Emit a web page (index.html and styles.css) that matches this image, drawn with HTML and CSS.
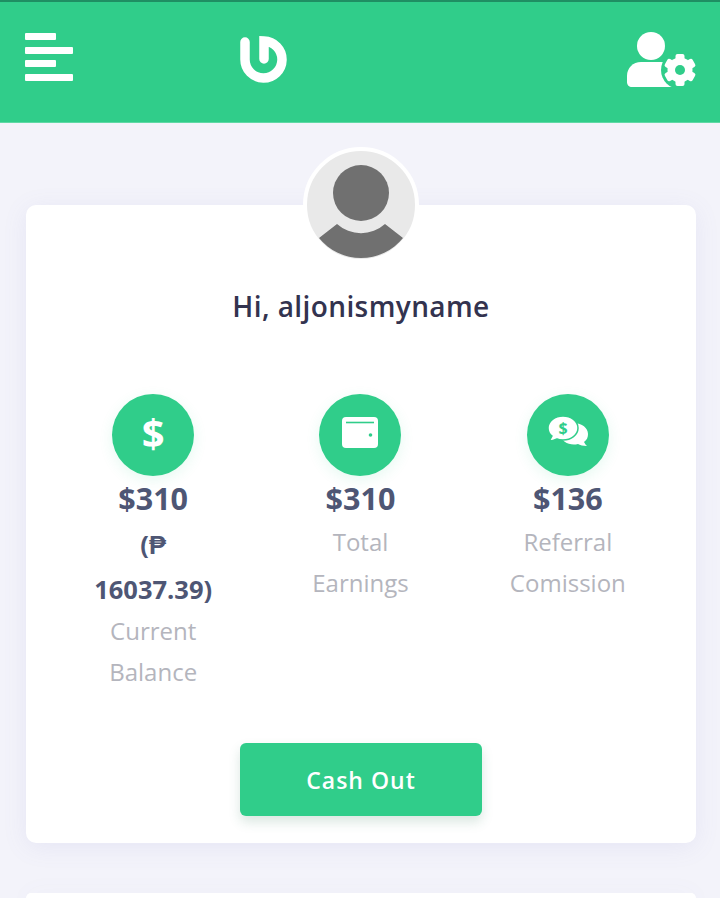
FILE: index.html
```html
<!DOCTYPE html>
<html lang="en">

<head>
    <meta charset="UTF-8">
    <meta name="viewport" content="width=device-width, initial-scale=1.0">
    <link rel="stylesheet" href="styles.css">
    <title>Dashboard</title>
</head>

<body>
    <header class="topbar">
        <div class="menu-icon">
            <span class="bar short"></span>
            <span class="bar"></span>
            <span class="bar short"></span>
            <span class="bar"></span>
        </div>
        <svg class="logo" width="48" height="48" viewBox="0 0 48 48">
            <path d="M5 6V23.5A18.5 18.5 0 1 0 24 5V23" fill="none" stroke="#fff" stroke-width="9.5" stroke-linecap="round" />
        </svg>
        <svg class="account-icon" width="70" height="56" viewBox="0 0 70 56">
            <circle cx="24" cy="14" r="14" fill="#fff" />
            <path d="M0 50V44C0 36 6 30 14 30H34C42 30 48 36 48 44V55H5C2 55 0 53 0 50Z" fill="#fff" />
            <circle cx="53" cy="38" r="19" fill="#30cd8a" />
            <g fill="#fff">
                <circle cx="53" cy="38" r="12.5" />
                <rect x="48.5" y="22" width="9" height="32" rx="2" />
                <rect x="48.5" y="22" width="9" height="32" rx="2" transform="rotate(60 53 38)" />
                <rect x="48.5" y="22" width="9" height="32" rx="2" transform="rotate(120 53 38)" />
            </g>
            <circle cx="53" cy="38" r="5" fill="#30cd8a" />
        </svg>
    </header>

    <main class="content">
        <section class="card">
            <div class="avatar">
                <svg width="108" height="108" viewBox="0 0 108 108">
                    <circle cx="54" cy="42" r="28" fill="#707070" />
                    <path d="M12 87L30 73A36 36 0 0 0 78 73L96 87A54 54 0 0 1 12 87Z" fill="#707070" />
                </svg>
            </div>
            <h1 class="greeting">Hi, aljonismyname</h1>

            <div class="stats">
                <div class="stat">
                    <div class="stat-icon dollar">$</div>
                    <div class="stat-value">$310</div>
                    <div class="stat-sub">(₱ 16037.39)</div>
                    <div class="stat-label">Current Balance</div>
                </div>
                <div class="stat">
                    <div class="stat-icon">
                        <svg width="36" height="31" viewBox="0 0 36 31">
                            <rect x="0" y="0" width="36" height="31" rx="4" fill="#fff" />
                            <path d="M4 5.5H32" stroke="#30cd8a" stroke-width="1.6" />
                            <circle cx="28.5" cy="18" r="1.8" fill="#30cd8a" />
                        </svg>
                    </div>
                    <div class="stat-value">$310</div>
                    <div class="stat-label">Total Earnings</div>
                </div>
                <div class="stat">
                    <div class="stat-icon">
                        <svg width="42" height="34" viewBox="0 0 42 34">
                            <path d="M27 8C35 8 41 13 41 19C41 22 40 25 37 27C38 29 39 30 40 31C36 31 33 30 31 29C23 31 14 27 13 19Z" fill="#fff" />
                            <path d="M16 1C24 1 31 6 31 13C31 20 24 25 16 25C14 25 12 25 10 24C8 25 5 26 2 26C3 25 4 23 5 21C2 19 1 16 1 13C1 6 8 1 16 1Z" fill="#fff" stroke="#30cd8a" stroke-width="1.5" />
                            <text class="bubble-dollar" x="16" y="19" text-anchor="middle">$</text>
                        </svg>
                    </div>
                    <div class="stat-value">$136</div>
                    <div class="stat-label">Referral Comission</div>
                </div>
            </div>

            <button class="cash-out">Cash Out</button>
        </section>

        <section class="card next-card"></section>
    </main>
</body>

</html>
```

FILE: styles.css
```css
html,
body {
    height: 100%;
    overflow: hidden;
}

body {
    margin: 0;
    font-family: "Open Sans", Arial, sans-serif;
    background-color: #f3f3fa;
}

.topbar {
    display: flex;
    align-items: center;
    box-sizing: border-box;
    height: 123px;
    padding: 0 23px 2px 25px;
    background-color: #30cd8a;
    border-top: 2px solid #1f8f63;
    border-bottom: 1px solid #5fd9a5;
}

.menu-icon {
    display: flex;
    flex-direction: column;
    gap: 6.5px;
    width: 48px;
    margin-bottom: 8px;
}

.bar {
    display: block;
    height: 7px;
    width: 48px;
    background-color: #fff;
    border-radius: 1px;
}

.bar.short {
    width: 31px;
}

.logo {
    margin-left: 167px;
    margin-bottom: 2px;
}

.account-icon {
    margin-left: auto;
    margin-bottom: 2px;
}

.content {
    padding: 82px 24px 0 26px;
}

.card {
    display: flex;
    flex-direction: column;
    align-items: center;
    padding: 0 24px 27px;
    background-color: #fff;
    border-radius: 10px;
    box-shadow: 0px 4px 24px rgba(120, 120, 200, 0.1);
}

.avatar {
    box-sizing: border-box;
    width: 116px;
    height: 116px;
    margin-top: -58px;
    background-color: #e9e9e9;
    border: 4px solid #fff;
    border-radius: 50%;
    overflow: hidden;
}

.avatar svg {
    display: block;
}

.greeting {
    margin: 23px 0 0;
    font-size: 28px;
    line-height: 40px;
    font-weight: 600;
    letter-spacing: 0.4px;
    color: #33334f;
}

.stats {
    display: grid;
    grid-template-columns: repeat(3, 1fr);
    width: 100%;
    margin: 68px 0 0 -1px;
}

.stat {
    display: flex;
    flex-direction: column;
    align-items: center;
    padding: 0 40px;
    text-align: center;
}

.stat-icon {
    display: flex;
    align-items: center;
    justify-content: center;
    flex-shrink: 0;
    box-sizing: border-box;
    width: 82px;
    height: 82px;
    padding-bottom: 6px;
    background-color: #30cd8a;
    border-radius: 50%;
    box-shadow: 0px 4px 14px rgba(48, 205, 138, 0.12);
    color: #fff;
}

.stat-icon.dollar {
    font-size: 40px;
    font-weight: 700;
}

.bubble-dollar {
    font-family: "Open Sans", Arial, sans-serif;
    font-size: 16px;
    font-weight: 700;
    fill: #30cd8a;
}

.stat-value {
    padding-bottom: 2px;
    font-size: 30.5px;
    line-height: 44px;
    font-weight: 700;
    color: #4e5674;
}

.stat-sub {
    font-size: 25.5px;
    line-height: 44.5px;
    font-weight: 700;
    color: #4e5674;
}

.stat-label {
    font-size: 24px;
    line-height: 40.5px;
    color: #b4b5bd;
}

.cash-out {
    width: 242px;
    height: 73px;
    margin-top: 51px;
    font-family: "Open Sans", Arial, sans-serif;
    font-size: 23px;
    font-weight: 600;
    letter-spacing: 1px;
    color: #fff;
    background-color: #30cd8a;
    border: none;
    border-radius: 6px;
    box-shadow: 0px 6px 12px rgba(48, 120, 90, 0.18);
    cursor: pointer;
}

.next-card {
    height: 5px;
    padding: 0;
    margin-top: 50px;
    border-radius: 10px 10px 0 0;
}
```
